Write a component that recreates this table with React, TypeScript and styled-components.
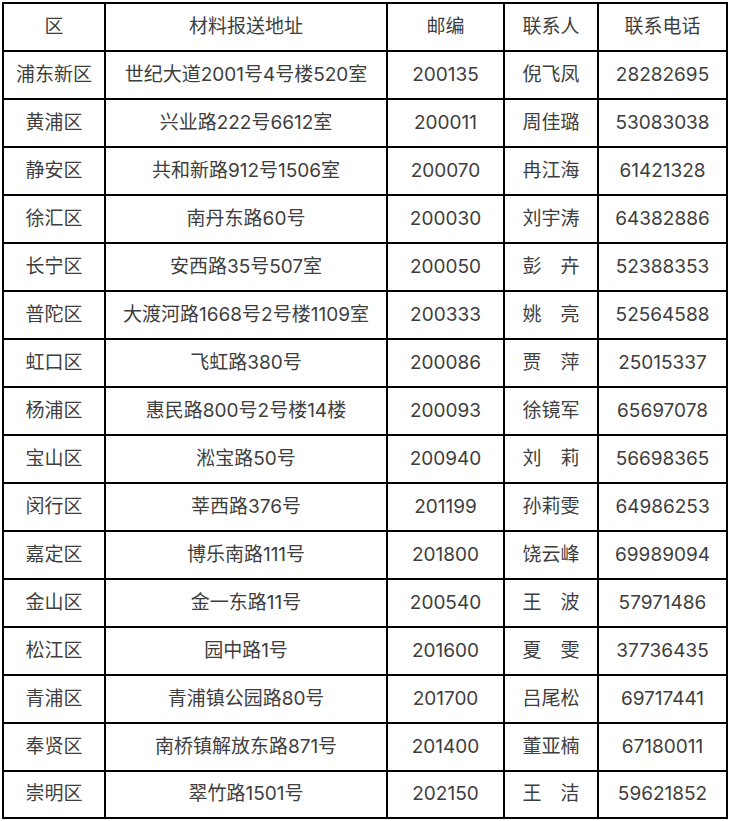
import styled, { createGlobalStyle } from "styled-components";

const GlobalStyle = createGlobalStyle`
  html, body {
    margin: 0;
    padding: 0;
    background: #fff;
  }
`;

interface IOffice {
  district: string;
  address: string;
  postcode: string;
  contact: string;
  phone: string;
}

const offices: IOffice[] = [
  { district: "浦东新区", address: "世纪大道2001号4号楼520室", postcode: "200135", contact: "倪飞凤", phone: "28282695" },
  { district: "黄浦区", address: "兴业路222号6612室", postcode: "200011", contact: "周佳璐", phone: "53083038" },
  { district: "静安区", address: "共和新路912号1506室", postcode: "200070", contact: "冉江海", phone: "61421328" },
  { district: "徐汇区", address: "南丹东路60号", postcode: "200030", contact: "刘宇涛", phone: "64382886" },
  { district: "长宁区", address: "安西路35号507室", postcode: "200050", contact: "彭\u3000卉", phone: "52388353" },
  { district: "普陀区", address: "大渡河路1668号2号楼1109室", postcode: "200333", contact: "姚\u3000亮", phone: "52564588" },
  { district: "虹口区", address: "飞虹路380号", postcode: "200086", contact: "贾\u3000萍", phone: "25015337" },
  { district: "杨浦区", address: "惠民路800号2号楼14楼", postcode: "200093", contact: "徐镜军", phone: "65697078" },
  { district: "宝山区", address: "淞宝路50号", postcode: "200940", contact: "刘\u3000莉", phone: "56698365" },
  { district: "闵行区", address: "莘西路376号", postcode: "201199", contact: "孙莉雯", phone: "64986253" },
  { district: "嘉定区", address: "博乐南路111号", postcode: "201800", contact: "饶云峰", phone: "69989094" },
  { district: "金山区", address: "金一东路11号", postcode: "200540", contact: "王\u3000波", phone: "57971486" },
  { district: "松江区", address: "园中路1号", postcode: "201600", contact: "夏\u3000雯", phone: "37736435" },
  { district: "青浦区", address: "青浦镇公园路80号", postcode: "201700", contact: "吕尾松", phone: "69717441" },
  { district: "奉贤区", address: "南桥镇解放东路871号", postcode: "201400", contact: "董亚楠", phone: "67180011" },
  { district: "崇明区", address: "翠竹路1501号", postcode: "202150", contact: "王\u3000洁", phone: "59621852" },
];

const columns = [102, 282, 117, 94, 129];

export default function App() {
  return (
    <Page>
      <GlobalStyle />
      <Table>
        <colgroup>
          {columns.map((w, i) => (
            <col key={i} style={{ width: w }} />
          ))}
        </colgroup>
        <thead>
          <tr>
            <Cell as="th">区</Cell>
            <Cell as="th">材料报送地址</Cell>
            <Cell as="th">邮编</Cell>
            <Cell as="th">联系人</Cell>
            <Cell as="th">联系电话</Cell>
          </tr>
        </thead>
        <tbody>
          {offices.map((o) => (
            <tr key={o.district}>
              <Cell>{o.district}</Cell>
              <Cell>{o.address}</Cell>
              <Cell>{o.postcode}</Cell>
              <Cell>{o.contact}</Cell>
              <Cell>{o.phone}</Cell>
            </tr>
          ))}
        </tbody>
      </Table>
    </Page>
  );
}

const Page = styled.div`
  padding: 2px 0 0 2px;
`;

const Table = styled.table`
  table-layout: fixed;
  width: 726px;
  border-collapse: separate;
  border-spacing: 0;
  border-top: 2px solid #000;
  border-left: 2px solid #000;
  font-family: Inter, "Noto Sans CJK SC", sans-serif;
  font-size: 19px;
  color: #3e3e3e;
  tbody tr:last-child td {
    height: 47px;
  }
`;

const Cell = styled.td`
  box-sizing: border-box;
  height: 48px;
  padding: 0 0 2px;
  text-align: center;
  vertical-align: middle;
  font-weight: 400;
  white-space: nowrap;
  line-height: 1;
  border-right: 2px solid #000;
  border-bottom: 2px solid #000;
`;
